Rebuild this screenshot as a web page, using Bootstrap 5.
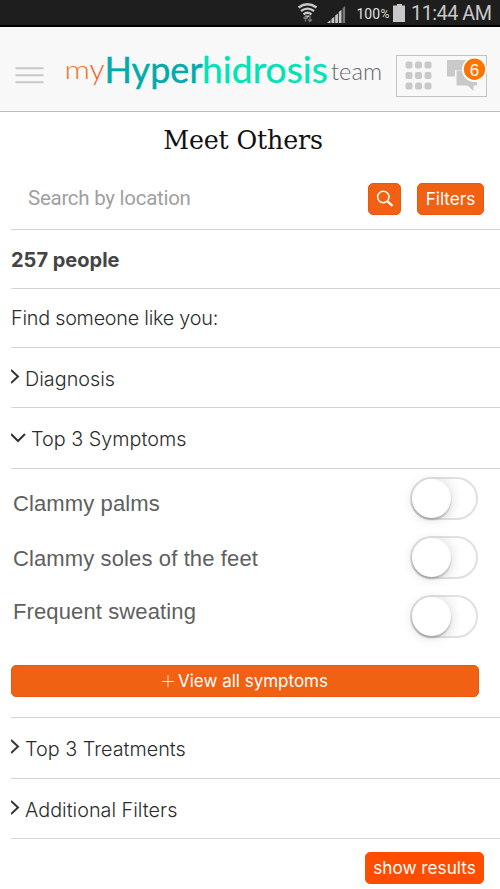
<!DOCTYPE html>
<html lang="en">
<head>
<meta charset="utf-8">
<meta name="viewport" content="width=device-width, initial-scale=1">
<title>Meet Others</title>
<link href="https://cdn.jsdelivr.net/npm/bootstrap@5.3.0/dist/css/bootstrap.min.css" rel="stylesheet">
<style>
body{font-family:Inter,"Liberation Sans",sans-serif;background:#fff;color:#444;height:889px;overflow:hidden;line-height:1}
svg{display:block;flex:none}
.statusbar{height:27px;background:#1e1e1e;border-bottom:2px solid #000}
.appbar{height:85px;background:#f8f8f8;border-bottom:1px solid #bbb}
.title-h{height:58px;padding-top:15px;padding-right:14px;font:25.3px/28px "DejaVu Serif",serif;letter-spacing:-.15px;color:#111}
.line{border-bottom:1px solid #d4d4d4;margin-left:11px}
.search{height:60px;padding:13px 16px 0 17px}
.search input{font:20.5px/28px Roboto,sans-serif;color:#999;width:300px;height:30px;letter-spacing:-.27px}
.search input::placeholder{color:#a0a0a0;opacity:1}
.btn-o{--bs-btn-color:#fff;--bs-btn-bg:#f06113;--bs-btn-border-color:#e9580b;--bs-btn-hover-color:#fff;--bs-btn-hover-bg:#e0560c;--bs-btn-border-radius:5px;--bs-btn-padding-x:0;--bs-btn-padding-y:0;height:32px;font-size:17.2px;line-height:30px}
.btn-find{width:33px;margin-right:16px}
.btn-filters{width:67px}
.btn-all{width:468px;margin-top:15px;font-size:17px}
.btn-hot{--bs-btn-bg:#ff4d00;--bs-btn-border-color:#ff4d00;width:119px;margin-top:5px}
.txtrow{height:60px;font-size:19.8px;font-weight:300;color:#2c2c2c;white-space:nowrap}
.row-count{height:59px;color:#444;font-size:20px;padding-top:1px}
.row-lead{height:59px;padding-top:2px;letter-spacing:-.24px}
.row-tall{height:61px}
.symptoms{height:249px;padding-top:4px}
.sym{font-family:"Liberation Sans",sans-serif;font-size:22px;letter-spacing:.12px;color:#606060;padding:0 22px 0 2px;height:59px}
.sym-a{padding-top:20px}
.sym-b{padding-top:16px}
.sym-c{padding-top:10px}
.switch{width:68px;height:43px;border:2px solid #e0e0e0;border-radius:22px;background:linear-gradient(90deg,#f3f3f3 35%,#fff 78%)}
.knob{width:39px;height:39px;border-radius:50%;background:#fff;box-shadow:0 2px 2px rgba(0,0,0,.22),0 2px 12px rgba(0,0,0,.13)}
</style>
<script src="https://cdn.jsdelivr.net/npm/bootstrap@5.3.0/dist/js/bootstrap.bundle.min.js"></script>
</head>
<body>
<div class="statusbar">
<svg width="500" height="25" fill="#c8c8c8" font-family="Roboto,sans-serif">
<g fill="none" stroke="#c8c8c8" stroke-width="2.300"><path d="M298.500 7.500q9-6.500 18 0M301 11q6.500-4.800 13 0M303.500 14.300q4-3 8 0"/></g>
<path d="M305 15.500h5l-2.500 2.500z"/>
<path d="M305.500 16.500v5M303.500 18.500l2-2 2 2M310 15.500v6M308 19.500l2 2 2-2" fill="none" stroke="#777" stroke-width="1.300"/>
<path d="M327 23l3.500-3v3zM331.500 19l2.800-2.200V23h-2.800zM335.200 15.500l2.700-2V23h-2.700zM338.800 12l2.700-2.200V23h-2.700z"/>
<path d="M342.500 8.500l2.600-2.700V23h-2.600z" fill="#777"/>
<text x="356.500" y="19" font-size="14" textLength="23.500" fill="#e0e0e0">100</text><text x="380.500" y="18" font-size="12" textLength="9" lengthAdjust="spacingAndGlyphs" fill="#d8d8d8">%</text>
<path d="M397 4h5v1.500h3V22h-12V5.500h4z"/>
<text x="411" y="20" font-size="19.800" textLength="81">11:44 AM</text>
</svg>
</div>
<header class="appbar">
<svg width="500" height="84">
<path d="M15.500 41.200H43.500M15.500 48.200H43.500M15.500 55.300H43.500" stroke="#c8c8c8" stroke-width="2"/>
<g font-family="Lato,sans-serif">
<text x="64.500" y="51.500" font-weight="300" font-size="25" textLength="25.500" lengthAdjust="spacingAndGlyphs" fill="#f4741f">m</text>
<text x="89.500" y="53" font-weight="300" font-size="29" textLength="15" lengthAdjust="spacingAndGlyphs" fill="#f4641f">y</text>
<text x="104.500" y="55.500" font-size="37" textLength="98" lengthAdjust="spacingAndGlyphs" fill="#00aaad" stroke="#00aaad" stroke-width=".4">Hyper</text>
<text x="202" y="55.500" font-size="37" textLength="126" lengthAdjust="spacingAndGlyphs" fill="#00e3b5" stroke="#00e3b5" stroke-width=".3">hidrosis</text>
<text x="331" y="53" font-weight="300" font-size="24" textLength="51" lengthAdjust="spacingAndGlyphs" fill="#66666e">team</text>
</g>
<rect x="396.500" y="28.500" width="90" height="41" fill="none" stroke="#c3c3c3"/>
<g fill="#c9c9c9"><rect x="405.500" y="34.500" width="7" height="7" rx="2"/><rect x="415" y="34.500" width="7" height="7" rx="2"/><rect x="424.500" y="34.500" width="7" height="7" rx="2"/><rect x="405.500" y="45" width="7" height="7" rx="2"/><rect x="415" y="45" width="7" height="7" rx="2"/><rect x="424.500" y="45" width="7" height="7" rx="2"/><rect x="405.500" y="55.500" width="7" height="7" rx="2"/><rect x="415" y="55.500" width="7" height="7" rx="2"/><rect x="424.500" y="55.500" width="7" height="7" rx="2"/>
<path d="M447 33h23v10H455v6.500h-8zM456.500 43.500H477v15h-3.500V64l-6-5.500h-11z"/></g>
<circle cx="474.500" cy="42.500" r="12.500" fill="#fff"/><circle cx="474.500" cy="42.300" r="10.700" fill="#ff7300"/>
<text x="474.500" y="48.500" text-anchor="middle" font-family="Liberation Sans,sans-serif" font-size="17" fill="#fff">6</text>
</svg>
</header>
<main>
<h1 class="title-h m-0 text-center">Meet Others</h1>
<div class="line search d-flex align-items-start">
<input class="border-0 p-0 bg-transparent" placeholder="Search by location" aria-label="Search by location">
<button class="btn btn-o btn-find ms-auto d-flex align-items-center justify-content-center" aria-label="Search"><svg width="18" height="18" fill="none" stroke="#fff"><circle cx="7.300" cy="7" r="5.700" stroke-width="1.500"/><path d="M11.500 11.200l5 4.700" stroke-width="2.200"/></svg></button>
<button class="btn btn-o btn-filters">Filters</button>
</div>
<div class="line txtrow row-count d-flex align-items-center fw-bold">257 people</div>
<div class="line txtrow row-lead d-flex align-items-center">Find someone like you:</div>
<div class="line txtrow d-flex align-items-center"><svg width="14" height="22" fill="none" stroke="#333" stroke-width="2"><path d="M0 3l7 6.500-7 6.500"/></svg><span class="pt-1">Diagnosis</span></div>
<div class="line txtrow row-tall d-flex align-items-center"><svg width="20" height="20" fill="none" stroke="#333" stroke-width="2"><path d="M0 6l7 7 7-7"/></svg><span class="pt-1">Top 3 Symptoms</span></div>
<section class="line symptoms">
<div class="sym d-flex justify-content-between"><span class="sym-a">Clammy palms</span><div class="switch mt-1"><div class="knob"></div></div></div>
<div class="sym d-flex justify-content-between"><span class="sym-b">Clammy soles of the feet</span><div class="switch mt-1"><div class="knob"></div></div></div>
<div class="sym d-flex justify-content-between"><span class="sym-c">Frequent sweating</span><div class="switch mt-1"><div class="knob"></div></div></div>
<button class="btn btn-o btn-all d-flex align-items-center justify-content-center"><svg class="me-1" width="12" height="12" stroke="#fff"><path d="M0 6.500h12M6 0v12" stroke-width=".8"/></svg>View all symptoms</button>
</section>
<div class="line txtrow row-tall d-flex align-items-center"><svg width="14" height="22" fill="none" stroke="#333" stroke-width="2"><path d="M0 3l7 6.500-7 6.500"/></svg><span class="pt-1">Top 3 Treatments</span></div>
<div class="line txtrow d-flex align-items-center"><svg width="14" height="22" fill="none" stroke="#333" stroke-width="2"><path d="M0 3l7 6.500-7 6.500"/></svg><span class="pt-1">Additional Filters</span></div>
<div class="d-flex justify-content-end pe-3 pt-2"><button class="btn btn-o btn-hot">show results</button></div>
</main>
</body>
</html>
